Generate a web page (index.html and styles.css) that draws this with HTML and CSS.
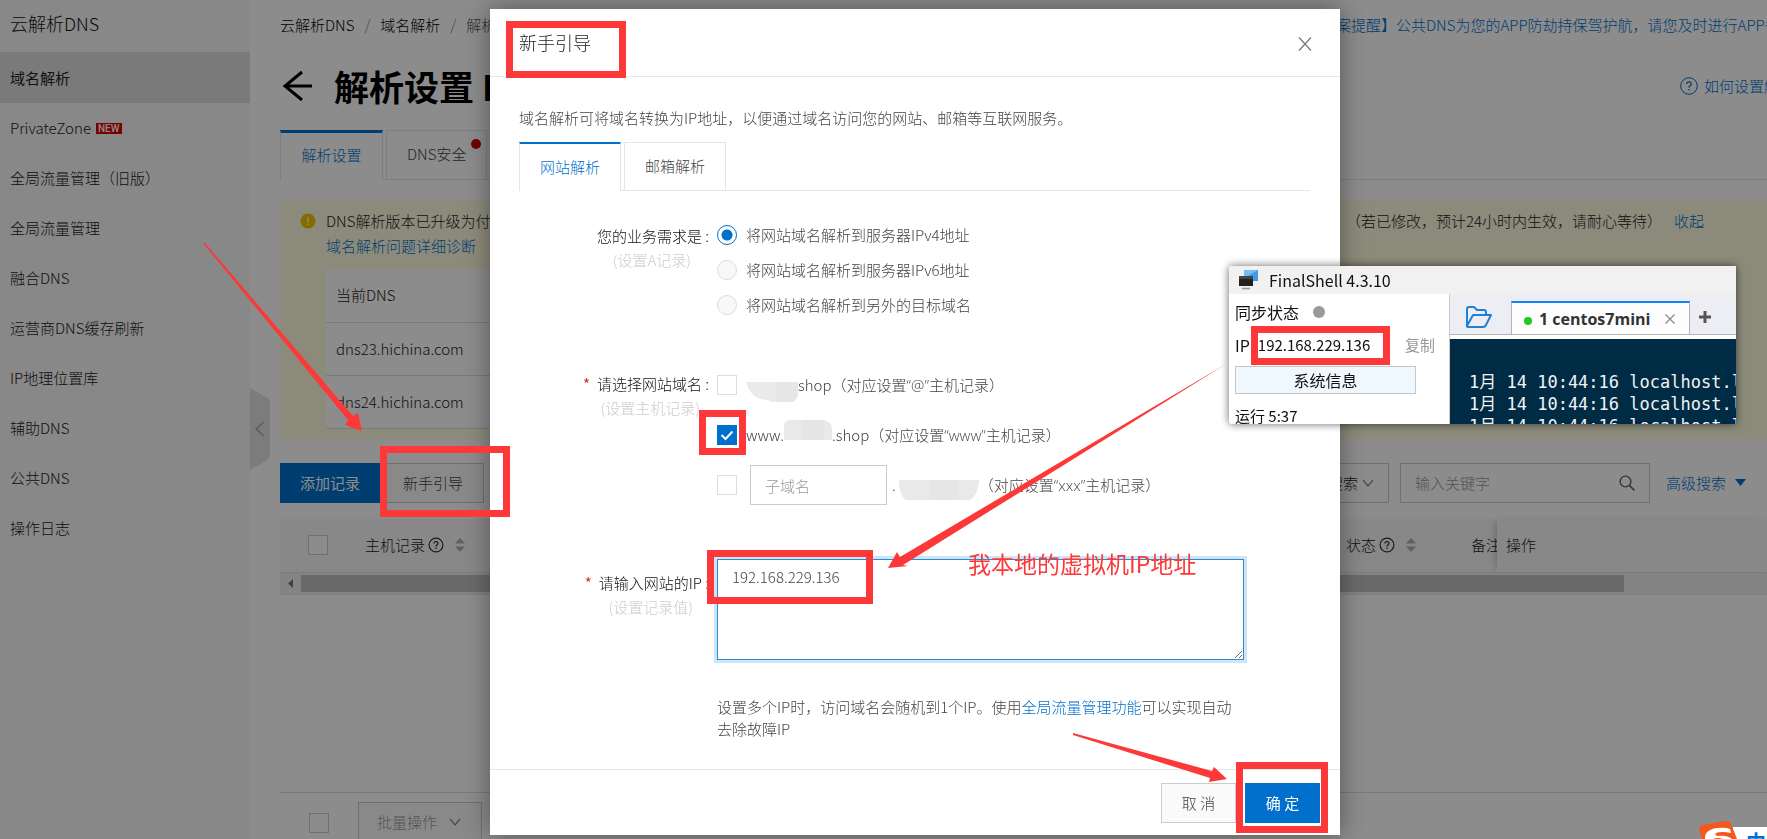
FILE: index.html
```html
<!DOCTYPE html>
<html lang="zh-CN">
<head>
<meta charset="utf-8">
<title>云解析DNS</title>
<link rel="stylesheet" href="styles.css">
</head>
<body>
<div class="app">
  <aside class="sidebar">
    <h2 class="sidebar-title">云解析DNS</h2>
    <nav class="menu">
      <a class="menu-item active" href="#">域名解析</a>
      <a class="menu-item" href="#">PrivateZone<span class="new-tag">NEW</span></a>
      <a class="menu-item" href="#">全局流量管理（旧版）</a>
      <a class="menu-item" href="#">全局流量管理</a>
      <a class="menu-item" href="#">融合DNS</a>
      <a class="menu-item" href="#">运营商DNS缓存刷新</a>
      <a class="menu-item" href="#">IP地理位置库</a>
      <a class="menu-item" href="#">辅助DNS</a>
      <a class="menu-item" href="#">公共DNS</a>
      <a class="menu-item" href="#">操作日志</a>
    </nav>
    <button class="collapse" aria-label="收起菜单">
      <svg width="20" height="82" viewBox="0 0 20 82"><path d="M0 0 L16 9 Q20 11 20 16 V66 Q20 70 16 73 L0 82 Z" fill="#e2e2e2"/><path d="M14 34 L6 41 L14 48" fill="none" stroke="#a8a8a8" stroke-width="1.5"/></svg>
    </button>
  </aside>

  <main class="main">
    <div class="crumb-row">
      <nav class="crumbs"><a href="#">云解析DNS</a><i>/</i><a href="#">域名解析</a><i>/</i><span>解析设置</span></nav>
      <a class="notice-link" href="#">【备案提醒】公共DNS为您的APP防劫持保驾护航，请您及时进行APP备案</a>
    </div>
    <div class="title-row">
      <button class="back" aria-label="返回"><svg width="32" height="32" viewBox="0 0 32 32"><path d="M31 16 H4 M21 2 L4 16 L21 30" fill="none" stroke="#000" stroke-width="3"/></svg></button>
      <h1>解析设置 DNS</h1>
      <a class="help-link" href="#"><svg width="18" height="18" viewBox="0 0 18 18"><circle cx="9" cy="9" r="8.3" fill="none" stroke="#0070cc" stroke-width="1"/><path d="M6.7 7 Q6.8 4.8 9 4.8 Q11.3 4.8 11.3 6.8 Q11.3 8 10 8.8 Q9 9.5 9 10.8 M9 12 V13.4" fill="none" stroke="#0070cc" stroke-width="1.2"/></svg>如何设置解析</a>
    </div>
    <div class="tabs page-tabs">
      <button class="tab current">解析设置</button>
      <button class="tab">DNS安全<span class="dot"></span></button>
    </div>

    <section class="alert">
      <svg class="alert-icon" width="16" height="16" viewBox="0 0 16 16"><circle cx="8" cy="8" r="7.6" fill="#f5c400"/><path d="M8 4 V9.2 M8 10.6 V12" stroke="#fff" stroke-width="1.4"/></svg>
      <div class="alert-body">
        <div class="alert-line"><span class="alert-text">DNS解析版本已升级为付费版</span><span class="alert-tail">（若已修改，预计24小时内生效，请耐心等待）</span><a href="#">收起</a></div>
        <div class="alert-line"><a href="#">域名解析问题详细诊断</a></div>
        <table class="dns-table">
          <thead><tr><th>当前DNS</th></tr></thead>
          <tbody><tr><td>dns23.hichina.com</td></tr><tr><td>dns24.hichina.com</td></tr></tbody>
        </table>
      </div>
    </section>

    <div class="toolbar">
      <button class="btn primary">添加记录</button><button class="btn">新手引导</button>
      <div class="search-tools">
        <div class="select-wrap"><select class="control" aria-label="搜索方式"><option>精确搜索</option></select><svg width="12" height="8" viewBox="0 0 12 8"><path d="M1 1 L6 7 L11 1" fill="none" stroke="#888" stroke-width="1.2"/></svg></div>
        <div class="keyword"><input class="control" type="text" placeholder="输入关键字" aria-label="输入关键字"><svg width="16" height="16" viewBox="0 0 16 16"><circle cx="6.5" cy="6.5" r="5.4" fill="none" stroke="#666" stroke-width="1.4"/><path d="M10.4 10.4 L15.4 15.4" stroke="#666" stroke-width="1.6"/></svg></div>
        <a class="advanced" href="#">高级搜索<svg width="11" height="7" viewBox="0 0 11 7"><path d="M0 0 H11 L5.500 7 Z" fill="#0070cc"/></svg></a>
      </div>
    </div>

    <div class="grid-head">
      <input class="check" type="checkbox" aria-label="全选">
      <span class="col-host">主机记录<svg class="q" width="16" height="16" viewBox="0 0 16 16"><circle cx="8" cy="8" r="6.900" fill="none" stroke="#333" stroke-width="1.2"/><path d="M6 6.500 Q6 4.600 8 4.600 Q10 4.600 10 6.300 Q10 7.300 8.800 8 Q8 8.500 8 9.500 M8 10.600 V11.900" fill="none" stroke="#333" stroke-width="1.2"/></svg><svg class="sort" width="10" height="16" viewBox="0 0 10 16"><path d="M0 6.500 L5 1 L10 6.500 Z M0 9.500 L5 15 L10 9.500 Z" fill="#b0b0b0"/></svg></span>
      <span class="col-state">状态<svg class="q" width="16" height="16" viewBox="0 0 16 16"><circle cx="8" cy="8" r="6.900" fill="none" stroke="#333" stroke-width="1.2"/><path d="M6 6.500 Q6 4.600 8 4.600 Q10 4.600 10 6.300 Q10 7.300 8.800 8 Q8 8.500 8 9.500 M8 10.600 V11.900" fill="none" stroke="#333" stroke-width="1.2"/></svg><svg class="sort" width="10" height="16" viewBox="0 0 10 16"><path d="M0 6.500 L5 1 L10 6.500 Z M0 9.500 L5 15 L10 9.500 Z" fill="#b0b0b0"/></svg></span>
      <span class="col-note">备注</span>
      <span class="col-op">操作</span>
    </div>
    <div class="hscroll"><svg width="21" height="17" viewBox="0 0 21 17"><path d="M13 4 V13 L8 8.500 Z" fill="#777"/></svg><div class="thumb"></div></div>
    <div class="spacer"></div>
    <div class="batch">
      <input class="check" type="checkbox" aria-label="选择全部记录">
      <button class="btn muted">批量操作<svg width="12" height="8" viewBox="0 0 12 8"><path d="M1 1 L6 7 L11 1" fill="none" stroke="#888" stroke-width="1.200"/></svg></button>
    </div>
  </main>
</div>

<div class="mask"></div>

<div class="dialog" role="dialog" aria-labelledby="dialog-title">
  <header class="dialog-head">
    <h3 id="dialog-title">新手引导</h3>
    <button class="close" aria-label="关闭"><svg width="14" height="14" viewBox="0 0 14 14"><path d="M1 0.500 L13 13.500 M13 0.500 L1 13.500" stroke="#777" stroke-width="1.200"/></svg></button>
  </header>
  <div class="dialog-body">
    <p class="intro">域名解析可将域名转换为IP地址，以便通过域名访问您的网站、邮箱等互联网服务。</p>
    <div class="tabs">
      <button class="tab current">网站解析</button>
      <button class="tab">邮箱解析</button>
    </div>
    <form class="form">
      <div class="field need">
        <div class="label"><div>您的业务需求是 :</div><small>(设置A记录)</small></div>
        <div class="options tight">
          <label class="option"><input class="radio" type="radio" name="need" checked>将网站域名解析到服务器IPv4地址</label>
          <label class="option"><input class="radio" type="radio" name="need">将网站域名解析到服务器IPv6地址</label>
          <label class="option"><input class="radio" type="radio" name="need">将网站域名解析到另外的目标域名</label>
        </div>
      </div>
      <div class="field host">
        <div class="label"><div><b>*</b>请选择网站域名 :</div><small>(设置主机记录)</small></div>
        <div class="options">
          <label class="option"><input class="check" type="checkbox"><svg class="smudge" width="52" height="34" viewBox="0 0 52 34"><path d="M0 14 H52 V27 Q50 34 45 34 H26 L22 32 Q5 32 0 14 Z" fill="#eaeaea"/><path d="M30 14 H52 V27 Q50 34 45 34 H30 Z" fill="#e6e6e6"/></svg>shop（对应设置<span class="latin">“@”</span>主机记录）</label>
          <label class="option"><input class="check" type="checkbox" checked>www.<svg class="smudge" width="48" height="34" viewBox="0 0 48 34"><path d="M0 9 Q0 2 6 2 H40 Q48 4 48 12 V22 H0 Z" fill="#e9e9e9"/><path d="M18 2 H40 V22 H18 Z" fill="#e5e5e5"/></svg>.shop（对应设置<span class="latin">“www”</span>主机记录）</label>
          <div class="option"><input class="check" type="checkbox" aria-label="自定义子域名"><input class="control sub" type="text" placeholder="子域名" aria-label="子域名">.<svg class="smudge last" width="83" height="34" viewBox="0 0 83 34"><path d="M3 12 H83 Q82 28 74 32 H10 Q3 28 3 12 Z" fill="#e9e9e9"/><path d="M34 12 H62 V32 H34 Z" fill="#e6e6e6"/></svg>（对应设置<span class="latin">“xxx”</span>主机记录）</div>
        </div>
      </div>
      <div class="field ip">
        <div class="label"><label for="ip"><b>*</b>请输入网站的IP :</label><small>(设置记录值)</small></div>
        <div class="options">
          <textarea id="ip">192.168.229.136</textarea>
          <p class="hint">设置多个IP时，访问域名会随机到1个IP。使用<a href="#">全局流量管理功能</a>可以实现自动去除故障IP</p>
        </div>
      </div>
    </form>
  </div>
  <footer class="dialog-foot">
    <button class="btn cancel">取 消</button>
    <button class="btn primary ok">确 定</button>
  </footer>
</div>

<section class="shell">
  <header class="shell-title"><svg width="22" height="20" viewBox="0 0 22 20"><rect x="6" y="0" width="14" height="11" fill="#3d9be8"/><path d="M6 0 H20 L6 8 Z" fill="#78bdf2"/><rect x="1" y="6" width="14" height="10" fill="#222"/><rect x="1" y="6" width="14" height="3" fill="#444"/><path d="M4 18.500 H12" stroke="#999" stroke-width="1.500"/></svg>FinalShell 4.3.10</header>
  <div class="shell-content">
    <div class="shell-side">
      <div class="shell-row">同步状态<span class="sync-dot"></span></div>
      <div class="shell-row"><span>IP</span><span class="shell-ip">192.168.229.136</span><span class="copy">复制</span></div>
      <button class="sysinfo">系统信息</button>
      <div class="shell-row uptime">运行 5:37</div>
    </div>
    <div class="shell-main">
      <div class="shell-tabs">
        <svg class="folder" width="28" height="22" viewBox="0 0 28 22"><path d="M2 19 V3 Q2 1 4 1 H9 L12 4 H19 Q21 4 21 6 V8 M2 20 L8 9 H26 L21 19 Q20 21 18 21 H3 Q1.500 21 2 19" fill="none" stroke="#1f80d8" stroke-width="2" stroke-linejoin="round"/></svg>
        <div class="shell-tab"><span class="green"></span>1 centos7mini<svg width="10" height="10" viewBox="0 0 10 10"><path d="M0.500 0.500 L9.500 9.500 M9.500 0.500 L0.500 9.500" stroke="#888" stroke-width="1.200"/></svg></div>
        <svg class="plus" width="14" height="14" viewBox="0 0 14 14"><path d="M7 1 V13 M1 7 H13" stroke="#555" stroke-width="3"/></svg>
      </div>
      <pre class="terminal">1月 14 10:44:16 localhost.localdomain
1月 14 10:44:16 localhost.localdomain
1月 14 10:44:16 localhost.localdomain</pre>
    </div>
  </div>
</section>

<div class="ime">
  <svg width="40" height="18" viewBox="0 0 40 18"><path d="M0 8 Q0 5 3 4 L26 0 Q30 -1 32 3 L38 18 H3 Z" fill="#f4581f"/><path d="M6 18 Q5 9 18 7 Q26 6 31 8 L32 12 Q22 10 17 12 Q15 14 19 15 Q28 14 33 18 H24 Q18 16 14 18 Z" fill="#fff"/></svg>
  <div class="ime-bar">中</div>
</div>

<svg class="marks" width="1767" height="839" viewBox="0 0 1767 839">
  <g fill="none" stroke="#fd3838" stroke-width="7">
    <rect x="509.500" y="24.500" width="113" height="50"/>
    <rect x="383.500" y="449.500" width="123" height="64"/>
    <rect x="702.500" y="413.500" width="40" height="38"/>
    <rect x="710.500" y="553.500" width="159" height="47"/>
    <rect x="1239.500" y="765.500" width="85" height="64"/>
    <rect x="1254.500" y="329.500" width="132" height="32"/>
  </g>
  <g fill="#fd3838">
    <path d="M203 243 L205 243 L353 416 L358 413 L362 431 L345 425 L348 420 Z"/>
    <path d="M1226 364 L903 565 L908 566 L888 568 L897 552 L900 557 Z"/>
    <path d="M1073 733 L1212 771 L1214 767 L1227 779 L1209 782 L1210 778 L1073 735 Z"/>
    <text class="mark-text" x="968" y="573">我本地的虚拟机IP地址</text>
  </g>
</svg>
</body>
</html>
```

FILE: styles.css
```css
* { box-sizing: border-box; }
body {
  margin: 0;
  height: 100vh;
  overflow: hidden;
  background: #fff;
  color: #222;
  font: 300 15px/22px "Noto Sans CJK SC", "Noto Sans", sans-serif;
}
a { color: #0070cc; text-decoration: none; }
button, input, select, textarea { font: inherit; color: inherit; }
button { cursor: pointer; }
h1, h2, h3, p { margin: 0; }
svg { flex: none; }

.app { display: flex; height: 100vh; }
.sidebar { position: relative; flex: 0 0 250px; background: #f7f7f7; }
.sidebar-title { height: 52px; margin: 0; padding-left: 10px; color: #111; font-size: 18px; line-height: 46px; font-weight: 300; }
.menu { display: flex; flex-direction: column; }
.menu-item { display: flex; align-items: center; height: 50px; padding-left: 10px; color: #222; }
.menu-item.active { height: 51px; background: #dedede; font-weight: 400; }
.new-tag { margin-left: 5px; padding: 0 2px; background: #d00; color: #fff; font: 500 10px/11px Roboto, sans-serif; }
.collapse { position: absolute; left: 100%; top: 388px; width: 20px; padding: 0; border: 0; background: none; line-height: 0; }

.main { flex: 1; min-width: 0; display: flex; flex-direction: column; padding-left: 30px; overflow: hidden; white-space: nowrap; }
.crumb-row { display: flex; justify-content: space-between; padding-top: 14px; }
.crumbs a { color: #000; }
.crumbs i { margin: 0 10px; color: #888; font-style: normal; }
.crumbs span { color: #555; }
.notice-link { flex: 0 0 461px; overflow: hidden; }
.title-row { display: flex; align-items: center; height: 94px; padding-top: 5px; }
.back { width: 34px; margin-right: 20px; padding: 0; border: 0; background: none; line-height: 0; }
.title-row h1 { flex: 1; color: #000; font-size: 35px; line-height: 50px; font-weight: 700; }
.help-link { display: flex; align-items: center; gap: 6px; flex: 0 0 87px; overflow: hidden; }

.tabs { display: flex; gap: 3px; border-bottom: 1px solid #e3e6ea; }
.tab { position: relative; height: 49px; margin-bottom: -1px; padding: 0 20px 2px; border: 1px solid #e3e6ea; background: #fff; color: #444; font-weight: 300; }
.tab.current { border-top: 2px solid #0070cc; border-bottom: 0; color: #0070cc; }
.page-tabs { flex: none; height: 50px; }
.page-tabs .tab { height: 50px; padding-bottom: 3px; }
.page-tabs .current { width: 103px; border-top-width: 3px; }
.dot { position: absolute; top: 8px; right: 5px; width: 10px; height: 10px; border-radius: 50%; background: #d00000; }

.alert { display: flex; margin-top: 20px; padding: 9px 0 10px 20px; background: #fffde0; }
.alert-icon { margin: 4px 10px 0 0; }
.alert-body { flex: 1; }
.alert-line { display: flex; height: 25px; line-height: 24px; }
.alert-text { flex: 0 0 1020px; }
.alert-tail { margin-right: 12px; }
.dns-table { width: 840px; margin-top: 10px; border-collapse: collapse; background: #fff; }
.dns-table th, .dns-table td { height: 53px; padding: 0 10px; border-bottom: 1px solid #dcdfe4; text-align: left; font-weight: 300; }

.toolbar { display: flex; gap: 2px; margin-top: 24px; }
.btn { height: 40px; padding: 0 20px; border: 1px solid #ccc; background: #fafafa; color: #444; }
.btn.primary { padding: 0 19px; border-color: #0070cc; background: #0070cc; color: #fff; font-weight: 400; }
.search-tools { display: flex; gap: 11px; margin-left: auto; padding-right: 21px; }
.control { height: 40px; border: 1px solid #ccc; border-radius: 0; background: #fff; outline: none; appearance: none; }
.control::placeholder { color: #999; opacity: 1; }
.select-wrap, .keyword { position: relative; }
.select-wrap .control { width: 130px; padding: 0 0 0 38px; }
.select-wrap svg { position: absolute; right: 15px; top: 16px; }
.keyword .control { width: 250px; padding: 0 14px; }
.keyword svg { position: absolute; right: 15px; top: 12px; }
.advanced { display: flex; align-items: center; gap: 9px; margin-left: 5px; }

.grid-head { display: flex; align-items: center; height: 54px; margin-top: 16px; padding-left: 28px; border-bottom: 1px solid #e3e6ea; background: #f7f7f7; }
.check, .radio { flex: none; width: 20px; height: 20px; margin: 0; border: 1px solid #ddd; background: #fff; appearance: none; }
.grid-head .check, .batch .check { border-color: #ccc; }
.col-host { display: flex; align-items: center; margin-left: 37px; }
.q { margin-left: 3px; }
.sort { margin-left: 11px; }
.col-state { display: flex; align-items: center; margin-left: auto; }
.col-note { width: 26px; margin-left: 55px; overflow: hidden; }
.col-op { display: flex; align-items: center; flex: 0 0 270px; height: 53px; padding-left: 9px; background: #f7f7f7; box-shadow: -4px 0 8px -4px rgba(0, 0, 0, .3); }
.hscroll { display: flex; height: 22px; padding: 2px 0; border-bottom: 1px solid #e3e6ea; background: #f1f1f1; }
.thumb { width: calc(100% - 164px); background: #c1c1c1; }
.spacer { flex: 1; }
.batch { display: flex; align-items: flex-start; gap: 29px; height: 47px; padding: 9px 0 0 29px; border-top: 1px solid #dcdfe4; }
.batch .check { margin-top: 11px; }
.muted { display: flex; align-items: center; gap: 12px; padding: 0 20px 0 18px; color: #999; }

.mask { position: fixed; inset: 0; background: rgba(0, 0, 0, .45); }

.dialog { position: absolute; left: 490px; top: 9px; width: 850px; background: #fff; box-shadow: 0 0 24px rgba(0, 0, 0, .4); color: #444; }
.dialog-head { display: flex; justify-content: space-between; height: 68px; padding: 21px 28px 0 29px; border-bottom: 1px solid #e3e6ea; }
.dialog-head h3 { color: #222; font-size: 18px; line-height: 24px; font-weight: 300; }
.close { height: 26px; padding: 7px 0 5px; border: 0; background: none; line-height: 0; }
.dialog-body { height: 692px; padding: 30px 30px 0 29px; }
.intro { margin-bottom: 13px; }
.field { display: flex; gap: 8px; }
.label { flex: 0 0 190px; text-align: right; color: #111; }
.label b { margin-right: 7px; color: #d93026; font-weight: 400; }
.label small { display: block; padding-right: 18px; color: #ccc; font-size: 15px; line-height: 25px; }
.host small { padding-right: 9px; }
.options { display: flex; flex-direction: column; gap: 10px; }
.need { padding-top: 26px; }
.need .label { padding-top: 8px; }
.tight { gap: 0; }
.option { display: flex; align-items: center; height: 40px; white-space: nowrap; }
.tight .option { height: 35px; }
.latin { font-family: "Open Sans", sans-serif; }
.radio { margin-right: 9px; border-radius: 50%; background: #f8f8f8; }
.radio:checked { border-color: #0070cc; background: radial-gradient(circle, #0070cc 5px, #fff 6px); }
.option .check { margin-right: 9px; }
.check:checked { border-color: #0070cc; background: #0070cc url("data:image/svg+xml,%3Csvg xmlns='http://www.w3.org/2000/svg' viewBox='0 0 18 18'%3E%3Cpath d='M3.500 9 L7.500 13 L14.500 5.500' fill='none' stroke='white' stroke-width='2'/%3E%3C/svg%3E"); }
.host { padding-top: 43px; }
.host .label { padding-top: 8px; }
.sub { width: 137px; margin: 0 5px 0 4px; padding: 0 14px; }
.ip { padding-top: 54px; }
.ip .label { padding-top: 13px; }
.ip small { padding-right: 16px; }
.ip .options { width: 527px; }
textarea { display: block; height: 101px; padding: 6px 14px; border: 1px solid #2a8bd3; outline: 3px solid #cfe4f4; background: #fff; resize: vertical; }
.hint { width: 516px; margin-top: 26px; }
.dialog-foot { display: flex; justify-content: flex-end; gap: 9px; height: 66px; padding: 13px 20px 0; border-top: 1px solid #e8e8e8; }
.btn.ok, .cancel { width: 75px; padding: 0; }

.shell { position: absolute; left: 1229px; top: 266px; width: 507px; height: 158px; display: flex; flex-direction: column; overflow: hidden; border-radius: 3px 0 0 3px; background: #fff; color: #111; box-shadow: 0 0 8px rgba(0, 0, 0, .6); font-size: 16px; font-weight: 400; }
.shell-title { display: flex; align-items: center; gap: 9px; flex: 0 0 28px; padding-left: 9px; background: #f1f1f1; }
.shell-content { display: flex; flex: 1; min-height: 0; }
.shell-side { flex: 0 0 220px; padding: 1px 6px; }
.shell-row { display: flex; align-items: center; height: 33px; }
.sync-dot { width: 12px; height: 12px; margin-left: 14px; border-radius: 50%; background: #999; }
.shell-ip { margin-left: 8px; font-size: 15px; }
.copy { margin-left: auto; padding-right: 8px; color: #999; font-size: 15px; }
.sysinfo { display: block; width: 181px; height: 28px; padding: 0; margin: 5px 0; border: 1px solid #c5c8cb; background: #f0f8ff; }
.uptime { font-size: 15px; }
.shell-main { flex: 1; min-width: 0; display: flex; flex-direction: column; border-left: 1px solid #ccc; }
.shell-tabs { display: flex; align-items: center; flex: 0 0 40px; border-bottom: 1px solid #b5b5b5; background: #eceef3; }
.folder { margin: 5px 18px 0 15px; }
.shell-tab { display: flex; align-items: center; height: 33px; margin-top: 7px; padding: 0 12px; border: solid #b5b5b5; border-width: 0 1px; border-top: 2px solid #0a84ff; background: #fdfdfd; color: #333; font: 700 16px/22px "Open Sans", sans-serif; }
.green { width: 8px; height: 8px; margin: 4px 7px 0 0; border-radius: 50%; background: #1ecb1e; }
.shell-tab svg { margin: 0 2px 0 15px; }
.plus { margin: 5px 0 0 8px; }
.terminal { flex: 1; margin: 4px 0 0; padding: 32px 0 0 19px; overflow: hidden; background: #002b45; color: #f2f2f2; font: 17px/22px "DejaVu Sans Mono", "Noto Sans CJK SC", monospace; }

.ime { position: fixed; right: 0; bottom: 0; display: flex; align-items: flex-end; width: 68px; height: 18px; overflow: hidden; }
.ime-bar { flex: 1; height: 12px; margin-left: -6px; padding: 3px 0 0 13px; background: #fff; color: #0070dd; font: 700 20px/24px "Noto Sans CJK SC", sans-serif; }
.ime svg { position: relative; z-index: 1; }
.marks { position: absolute; left: 0; top: 0; pointer-events: none; }
.mark-text { font-size: 23px; font-weight: 400; }
```
